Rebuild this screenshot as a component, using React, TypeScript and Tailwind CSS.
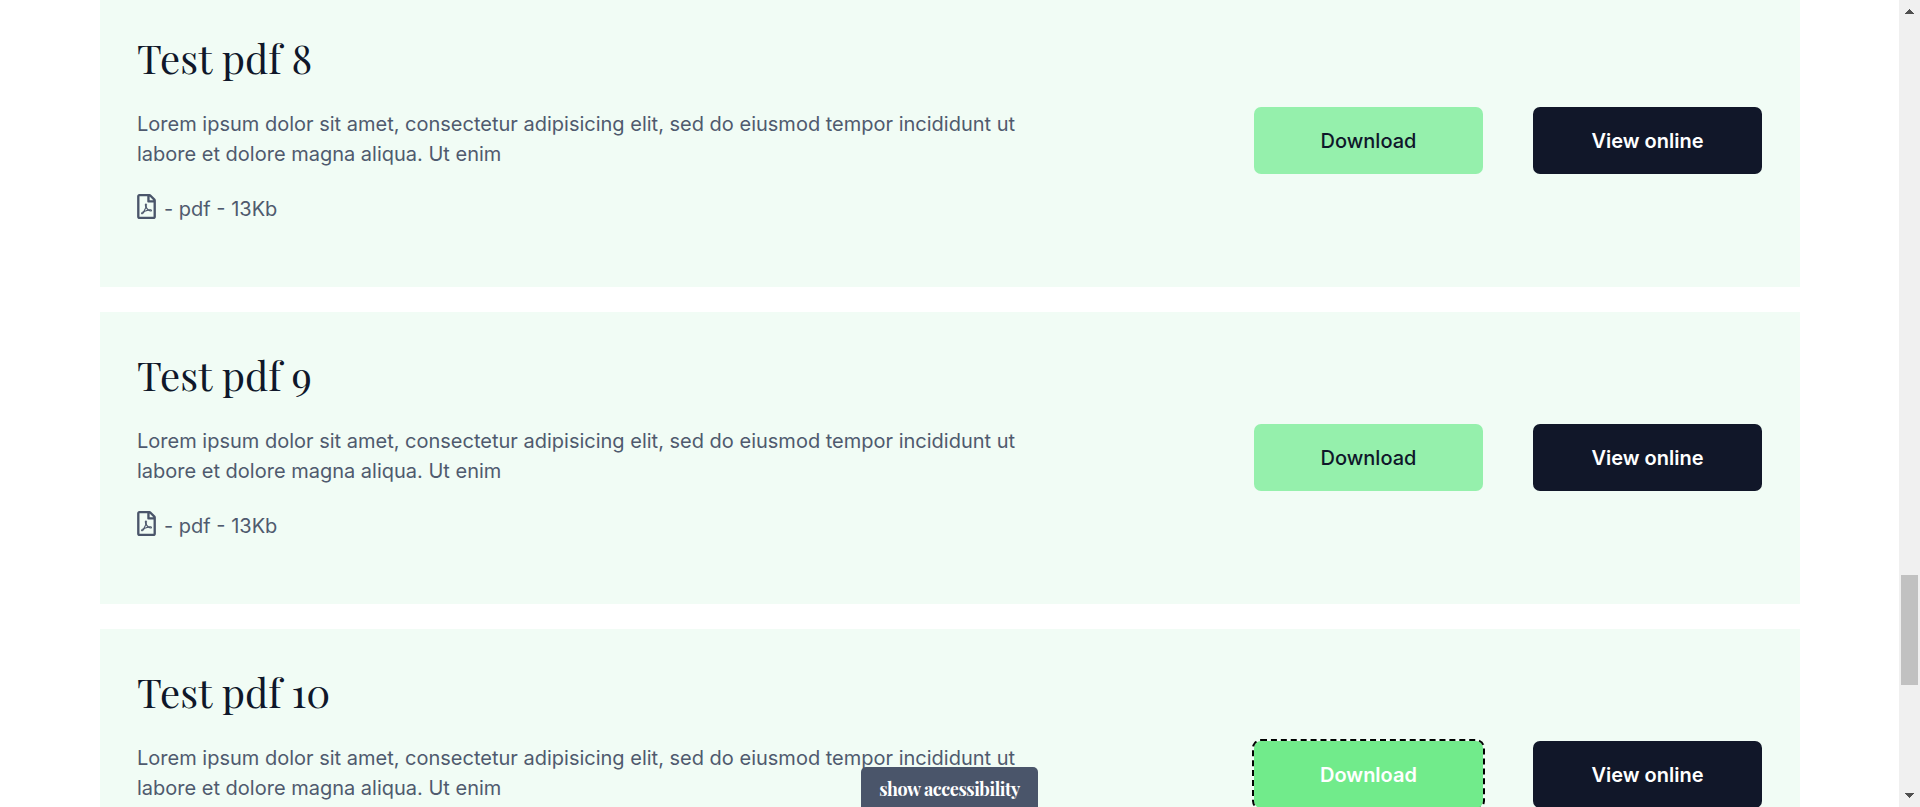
import { FaRegFilePdf } from 'react-icons/fa';

const documents = [
  { id: 8, focused: false },
  { id: 9, focused: false },
  { id: 10, focused: true },
];

const serif = "font-['Playfair_Display','Liberation_Serif',serif]";

function DocumentCard({ id, focused }: { id: number; focused: boolean }) {
  return (
    <article className="flex h-[292px] w-[1700px] shrink-0 items-start justify-between bg-[#f1fcf5] pl-[37px] pr-[38px]">
      <div className="w-[910px] pt-[38px] text-[20px] font-normal leading-[30px] text-[#4f5a6e]">
        <h2 className={`${serif} h-[50px] whitespace-nowrap text-[40px] font-normal leading-[50px] text-[#0f172a]`}>
          Test pdf {id}
        </h2>
        <p className="mt-[26px]">
          Lorem ipsum dolor sit amet, consectetur adipisicing elit, sed do eiusmod tempor incididunt ut
          <br />
          labore et dolore magna aliqua. Ut enim
        </p>
        <div className="mt-[25px] flex h-[30px] items-center">
          <FaRegFilePdf className="-mt-[5px] h-[25px] w-[19px] text-[#4a556a]" />
          <span className="ml-[8px]">- pdf - 13Kb</span>
        </div>
      </div>
      <div className="mt-[112px] flex gap-[50px] text-[20px] font-semibold">
        <button
          className={
            focused
              ? 'h-[67px] w-[229px] rounded-[7px] bg-[#71eb8b] text-white outline-2 outline-dashed outline-black'
              : 'h-[67px] w-[229px] rounded-[7px] bg-[#95f0ac] font-medium text-[#0f172a]'
          }
        >
          Download
        </button>
        <button className="h-[67px] w-[229px] rounded-[7px] bg-[#111729] text-white">View online</button>
      </div>
    </article>
  );
}

export default function App() {
  return (
    <div className="relative flex h-[807px] w-[1920px] overflow-hidden bg-white font-['Inter',sans-serif]">
      <main className="-mt-[5px] flex flex-1 flex-col gap-[25px] pl-[100px]">
        {documents.map((doc) => (
          <DocumentCard key={doc.id} id={doc.id} focused={doc.focused} />
        ))}
      </main>
      <aside className="flex w-[21px] flex-col items-center bg-[#f0f0f0]">
        <svg className="mt-[9px] h-[5px] w-[9px] shrink-0" viewBox="0 0 9 5" fill="#505050" shapeRendering="crispEdges">
          <path d="M4 0h1v1h1v1h1v1h1v1h1v1H0V4h1V3h1V2h1V1h1z" />
        </svg>
        <div className="mt-[561px] h-[110px] w-[17px] shrink-0 bg-[#c1c1c1]" />
        <svg className="mt-[108px] h-[5px] w-[9px] shrink-0" viewBox="0 0 9 5" fill="#505050" shapeRendering="crispEdges">
          <path d="M0 0h9v1H8v1H7v1H6v1H5v1H4V4H3V3H2V2H1V1H0z" />
        </svg>
      </aside>
      <button
        className={`${serif} absolute left-[861px] top-[767px] h-[50px] w-[177px] whitespace-nowrap rounded-t-[5px] bg-[#4a556a] pb-[6px] text-[18px] font-bold tracking-[-0.45px] text-white`}
      >
        show accessibility
      </button>
    </div>
  );
}
